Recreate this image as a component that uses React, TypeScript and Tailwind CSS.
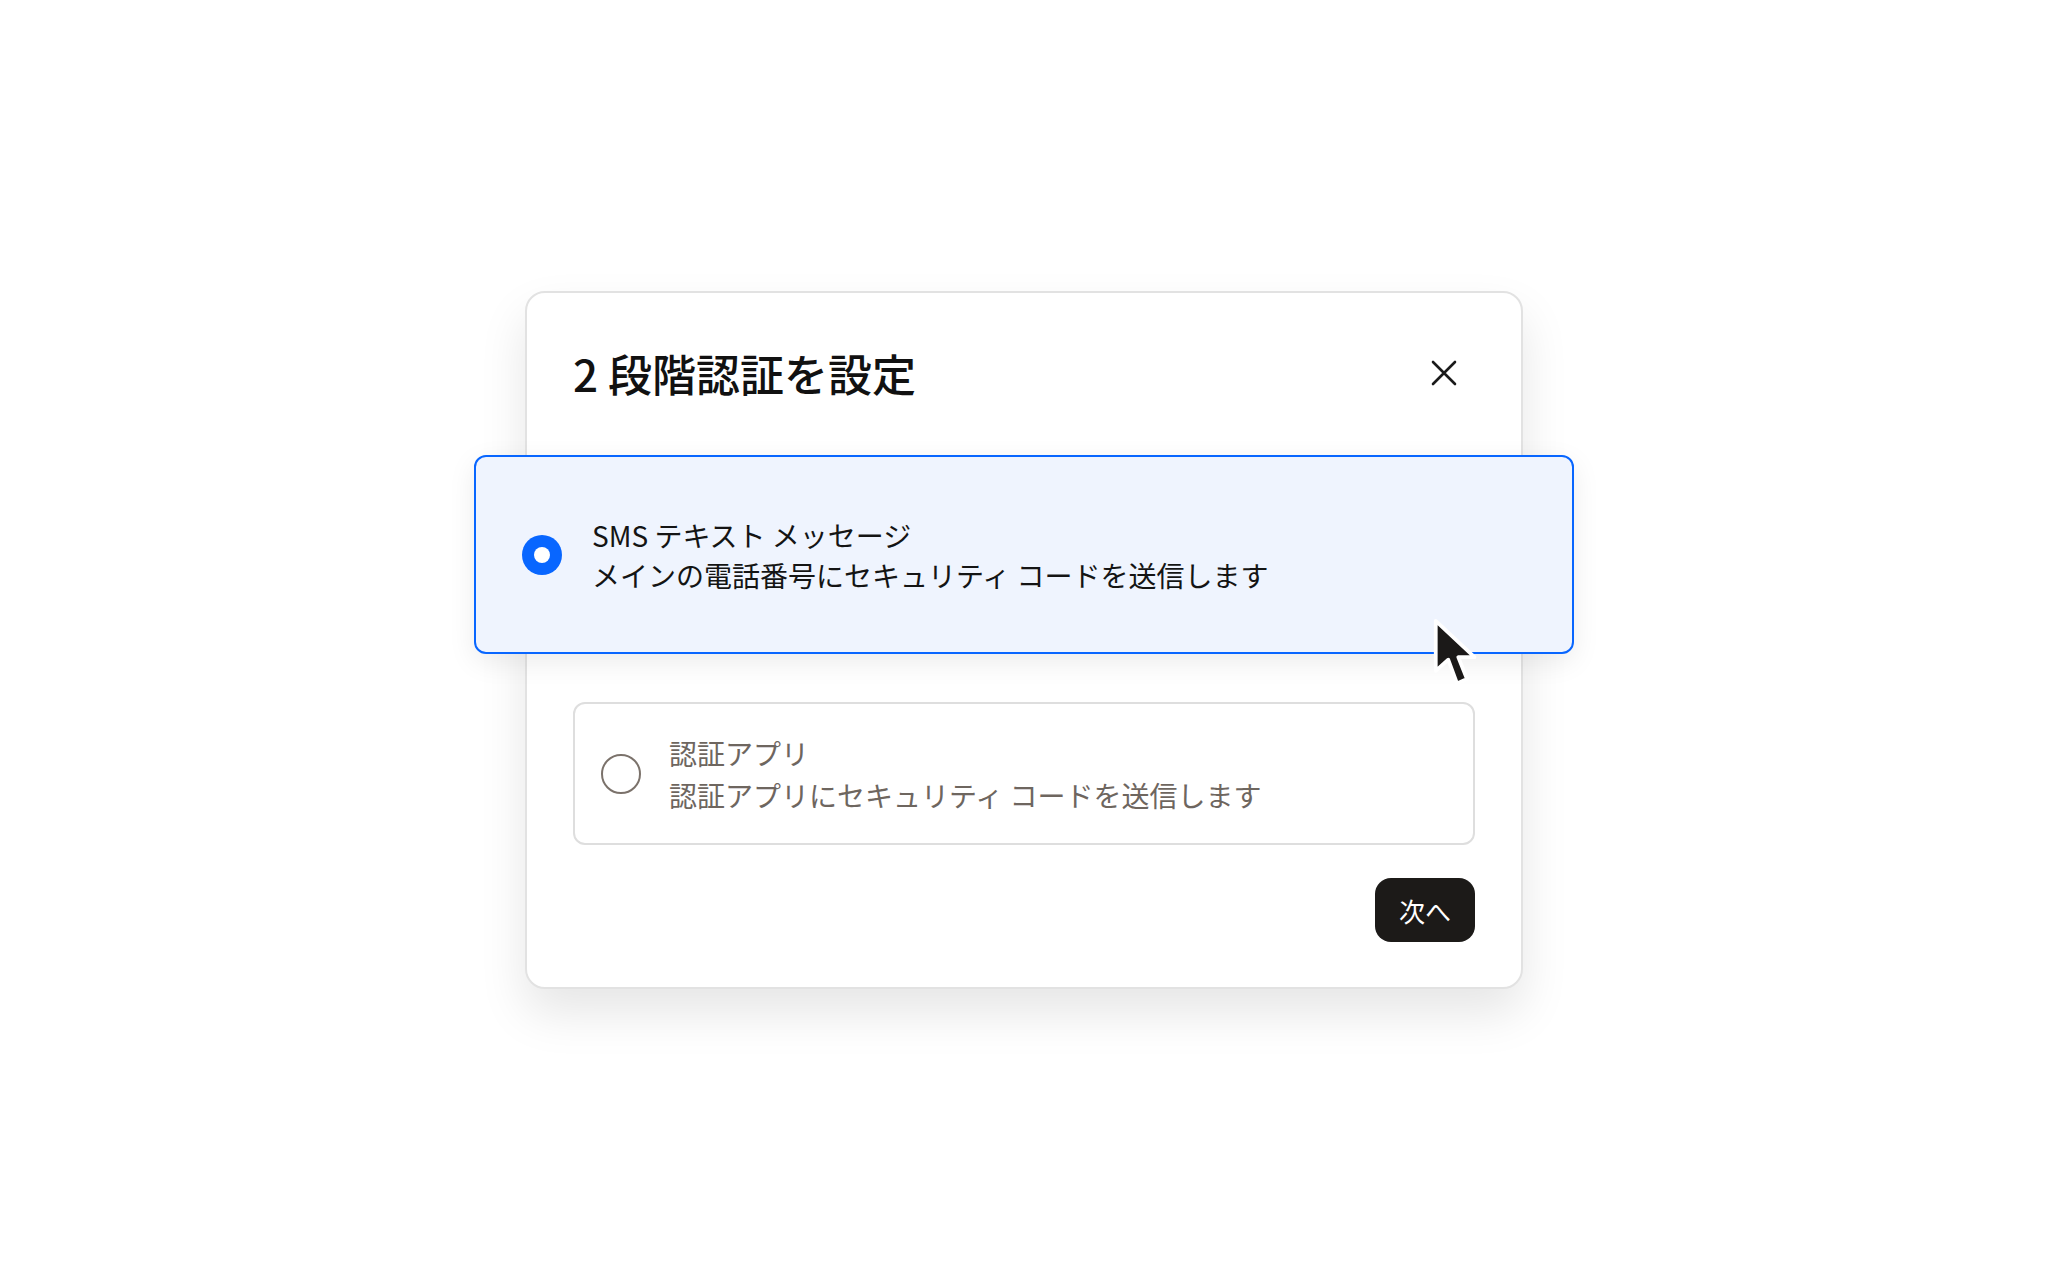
import React from 'react';

const font = { fontFamily: '"Noto Sans CJK JP", "Noto Sans", sans-serif' };

const Cursor: React.FC = () => (
  <svg
    className="absolute left-[956px] top-[160px]"
    width="50"
    height="74"
    viewBox="-3 -3 40 59"
  >
    <path
      d="M0 0 L0 40 L10 31 L17 50 L25 46.5 L18 29 L31 29 Z"
      fill="#1b1918"
      stroke="#ffffff"
      strokeWidth="3"
      strokeLinejoin="round"
    />
  </svg>
);

const App: React.FC = () => {
  return (
    <div className="w-full h-[1280px] bg-white flex items-center justify-center" style={font}>
      <div className="w-[998px] bg-white border-2 border-[#e2e2e2] rounded-[20px] px-[46px] pt-[46px] pb-[45px] shadow-[0_24px_48px_rgba(0,0,0,0.10)]">
        {/* header */}
        <div className="h-[68px] flex items-center justify-between">
          <h2 className="text-[44px] font-medium text-[#111111] leading-none">2 段階認証を設定</h2>
          <button className="w-[62px] h-[62px] flex items-center justify-center">
            <svg width="26" height="26" viewBox="0 0 26 26">
              <path d="M2 2 L24 24 M24 2 L2 24" stroke="#1a1a1a" strokeWidth="2.6" strokeLinecap="round" />
            </svg>
          </button>
        </div>

        {/* selected option */}
        <div className="relative mt-[48px] -mx-[99px] h-[199px] border-2 border-[#0866ff] bg-[#eff4fe] rounded-xl pl-[46px] flex items-center gap-[30px] shadow-[0_8px_28px_rgba(0,0,0,0.08)]">
          <div className="w-10 h-10 rounded-full bg-[#0866ff] flex items-center justify-center shrink-0">
            <div className="w-4 h-4 rounded-full bg-white" />
          </div>
          <div className="text-[28px] leading-[40px] text-[#141414]">
            <div>SMS テキスト メッセージ</div>
            <div>メインの電話番号にセキュリティ コードを送信します</div>
          </div>
          <Cursor />
        </div>

        {/* second option */}
        <div className="mt-[48px] h-[143px] border-2 border-[#dedede] rounded-xl pl-[26px] flex items-center gap-[28px]">
          <div className="w-10 h-10 rounded-full border-2 border-[#7b726b] shrink-0" />
          <div className="text-[28px] leading-[42px] text-[#6e665f]">
            <div>認証アプリ</div>
            <div>認証アプリにセキュリティ コードを送信します</div>
          </div>
        </div>

        {/* footer */}
        <div className="mt-[33px] flex justify-end">
          <button className="h-16 px-6 rounded-2xl bg-[#1c1a18] text-white text-[26px]">次へ</button>
        </div>
      </div>
    </div>
  );
};

export default App;
